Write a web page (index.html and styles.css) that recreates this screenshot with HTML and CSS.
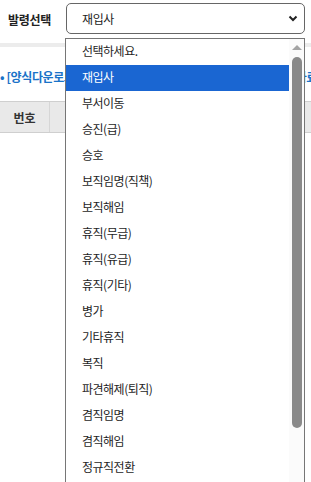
FILE: index.html
```html
<!DOCTYPE html>
<html>
<head>
  <title>발령선택</title>
  <link rel="stylesheet" href="styles.css">
</head>
<body>
  <div class="top">
    <span class="label">발령선택</span>
    <div class="select-wrap">
      <div class="select">
        <span>재입사</span>
        <svg class="chevron" width="10" height="7" viewBox="0 0 10 7">
          <polyline points="1.5,1.5 5,5 8.5,1.5" fill="none" stroke="#222" stroke-width="2"/>
        </svg>
      </div>
      <div class="dropdown">
        <ul class="options">
          <li>선택하세요.</li>
          <li class="selected">재입사</li>
          <li>부서이동</li>
          <li>승진(급)</li>
          <li>승호</li>
          <li>보직임명(직책)</li>
          <li>보직해임</li>
          <li>휴직(무급)</li>
          <li>휴직(유급)</li>
          <li>휴직(기타)</li>
          <li>병가</li>
          <li>기타휴직</li>
          <li>복직</li>
          <li>파견해제(퇴직)</li>
          <li>겸직임명</li>
          <li>겸직해임</li>
          <li>정규직전환</li>
        </ul>
        <div class="scrollbar">
          <span class="arrow"></span>
          <span class="thumb"></span>
        </div>
      </div>
    </div>
  </div>
  <div class="divider"></div>
  <p class="notice">
    <span>• [양식다운로드] 인사발령 일괄등록</span>
    <span>자료</span>
  </p>
  <table class="list">
    <thead>
      <tr>
        <th class="no">번호</th>
        <th>구분</th>
        <th>성명</th>
      </tr>
    </thead>
  </table>
</body>
</html>
```

FILE: styles.css
```css
body {
  margin: 0;
  width: 311px;
  height: 482px;
  overflow: hidden;
  font-family: "Noto Sans CJK KR", "Noto Sans", sans-serif;
  font-size: 12px;
  color: #222;
  background: #fff;
}

.top {
  display: flex;
  align-items: center;
  height: 40px;
  padding: 0 0 0 8px;
}

.label {
  width: 58px;
  font-weight: bold;
  font-size: 12px;
  letter-spacing: -0.3px;
  color: #222;
  margin-top: -1px;
}

.select-wrap {
  position: relative;
  width: 239px;
}

.select {
  display: flex;
  align-items: center;
  justify-content: space-between;
  height: 29px;
  margin-top: -4px;
  padding: 0 6px 0 15px;
  border: 1px solid #666;
  border-radius: 5px;
  letter-spacing: -0.4px;
}

.dropdown {
  position: absolute;
  top: 31px;
  left: -1px;
  width: 238px;
  height: 446px;
  border: 1px solid #767676;
  border-bottom: none;
  background: #fff;
  overflow: hidden;
  z-index: 2;
}

.options {
  list-style: none;
  margin: 0;
  padding: 0;
  width: 223px;
}

.options li {
  height: 26px;
  line-height: 24px;
  padding-left: 16px;
  letter-spacing: -0.5px;
  color: #1e1e1e;
}

.options li.selected {
  background: #1a66d2;
  color: #fff;
}

.scrollbar {
  position: absolute;
  top: 0;
  right: 0;
  bottom: 0;
  width: 15px;
  background: #fbfbfb;
}

.arrow {
  position: absolute;
  top: 6px;
  left: 3px;
  border-left: 5px solid transparent;
  border-right: 5px solid transparent;
  border-bottom: 5px solid #a3a3a3;
}

.thumb {
  position: absolute;
  top: 18px;
  left: 3px;
  width: 10px;
  height: 371px;
  border-radius: 5px;
  background: #8a8a8a;
}

.divider {
  height: 4px;
  margin-top: 3px;
  background: #ececec;
}

.notice {
  display: flex;
  justify-content: space-between;
  margin: 21px -6px 0 0;
  white-space: nowrap;
  font-weight: bold;
  font-size: 12px;
  letter-spacing: -0.4px;
  color: #1a73c8;
}

.list {
  border-collapse: collapse;
  width: 100%;
  margin-top: 16px;
}

.list th {
  height: 30px;
  padding: 0;
  background: #e9e9e9;
  border-top: 1px solid #cfcfcf;
  border-bottom: 1px solid #cfcfcf;
  border-left: 1px solid #d6d6d6;
  font-size: 12px;
  color: #333;
}

.list th.no {
  width: 49px;
  border-left: none;
}
```
